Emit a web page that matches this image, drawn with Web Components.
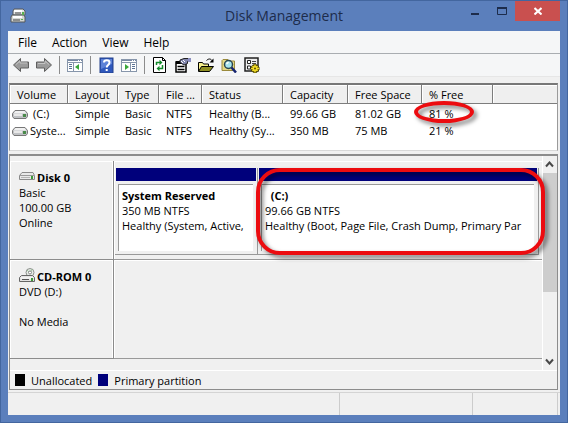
<!DOCTYPE html>
<html lang="en">
<head>
<meta charset="utf-8">
<title>Disk Management</title>
<style>
  body {
    margin: 0;
    font: 11px/15px "Open Sans", "Noto Sans", sans-serif;
    color: #000;
  }
</style>
</head>
<body>
<dm-window></dm-window>

<script>
const ICONS = {
  app: `
    <path d="M4 1h9l2 2v4H3V3z" fill="#e4e6e4" stroke="#56595c"/>
    <path d="M4 3h8" stroke="#fff" stroke-width="2"/>
    <path d="M5 5h6" stroke="#444"/>
    <path d="M2 7h12l1 2v5H1V9z" fill="#d5d7d3" stroke="#55585a"/>
    <path d="M3 9h9" stroke="#fff" stroke-width="2"/>
    <path d="M3 12h7" stroke="#444"/>
    <rect x="12" y="4" width="2" height="3" fill="#58b04e"/>
    <rect x="11" y="11" width="2" height="1" fill="#58b04e"/>`,
  drive: `
    <path d="M3 4.500h10l2.500 3v3l-1.500 2h-12l-1.500-2v-3z" fill="#bfc1c4" stroke="#777"/>
    <path d="M3.500 5h9l2 2.500h-13z" fill="#f1f1f1"/>
    <path d="M2 9h8" stroke="#e8e8e8" stroke-width="2"/>
    <rect x="11" y="8" width="3" height="3" fill="#4a8a4a"/>`,
  disk: `
    <path d="M3 3.500h11l1.500 3v4h-15v-4z" fill="#e8e8e8" stroke="#8a8a8a"/>
    <path d="M1 6.500h14" stroke="#999"/>
    <path d="M2 8.500h9" stroke="#b4b4b4"/>
    <rect x="12" y="7" width="2" height="3" fill="#3e9a3a"/>`,
  cdrom: `
    <circle cx="11" cy="4.500" r="4" fill="#e6ebe6" stroke="#8d918d"/>
    <path d="M8 2l3 3 2-4" fill="none" stroke="#9cc49c"/>
    <circle cx="11" cy="4.500" r="1.500" fill="#fff" stroke="#888"/>
    <path d="M2.500 7.500h11l2 2v4h-15v-4z" fill="#e3e3e3" stroke="#666"/>
    <path d="M2 10h12" stroke="#fff"/>
    <path d="M3 11.500h7" stroke="#555"/>
    <rect x="12" y="10" width="2" height="3" fill="#3e9a3a"/>`,
  back: `<path d="M.5 8l7-6.500v3.500h8v6h-8v3.500z" fill="#9b9b9b" stroke="#5e5e5e"/><path d="M3 7.500l4-3.500v2h7" fill="none" stroke="#c4c4c4"/>`,
  forward: `<path d="M15.500 8l-7-6.500v3.500h-8v6h8v3.500z" fill="#9b9b9b" stroke="#5e5e5e"/><path d="M2 6.500h7v-2.500l4 3.500" fill="none" stroke="#c4c4c4"/>`,
  tree: `
    <rect x=".5" y="2.500" width="15" height="12" fill="#fff" stroke="#8796ab"/>
    <path d="M1 3.500h14" stroke="#7889a4"/><path d="M11 3.500h3" stroke="#fff" stroke-dasharray="1 1"/>
    <path d="M1 5.500h14M6.500 6v8" stroke="#8796ab"/>
    <path d="M2 7.500h3M2 9.500h3M2 11.500h3" stroke="#5c7394"/>
    <path d="M12 7v6L8 10z" fill="#3aa63a"/>`,
  help: `
    <rect x="2" y="1" width="13" height="15" fill="#2f58bc" stroke="#24418c"/>
    <path d="M3 2h11v5L3 12z" fill="#5d82d8"/>
    <path d="M6 5.500C6 2.500 11.500 2.500 11.500 5.500 11.500 8 8.700 7.800 8.700 10.500" fill="none" stroke="#fff" stroke-width="2"/>
    <rect x="7.700" y="12" width="2" height="2" fill="#fff"/>`,
  panel: `
    <rect x=".5" y="2.500" width="15" height="12" fill="#fff" stroke="#8796ab"/>
    <path d="M1 3.500h14" stroke="#7889a4"/><path d="M11 3.500h3" stroke="#fff" stroke-dasharray="1 1"/>
    <path d="M1 5.500h14M9.500 6v8" stroke="#8796ab"/>
    <path d="M11 7.500h3M11 9.500h3M11 11.500h3" stroke="#5c7394"/>
    <path d="M4 7v6l4-3z" fill="#3aa63a"/>`,
  refresh: `
    <path d="M1.500.5h9l3 3v12h-12z" fill="#fff" stroke="#000"/>
    <path d="M10.500.5v3h3" fill="none" stroke="#000"/>
    <path d="M4.500 8V5.500h4M10.500 8v3.500h-4" fill="none" stroke="#138a2b" stroke-width="1.500"/>
    <path d="M7.500 2.800v5.400L10.500 5.500zM7.500 8.800v5.400L4.500 11.500z" fill="#138a2b"/>`,
  properties: `
    <path d="M1 5h10v10H1z" fill="#fff" stroke="#000" stroke-width="1.500"/>
    <path d="M1 5.500h8" stroke="#000" stroke-width="3"/>
    <path d="M2.500 9.500h7M2.500 12.500h7" stroke="#000" stroke-width="1.500"/>
    <path d="M5 3l4-1.500h5l1.500 2-3 1v2L9 8 5 5.500z" fill="#8185ac" stroke="#222"/>
    <path d="M13 1h3v4h-3z" fill="#8b8ec0"/>
    <path d="M6 4l2 2M8 3l2 2" stroke="#fff"/>`,
  open: `
    <path d="M.5 14V5.500h4l1 1.500h5v3" fill="#f7f18e" stroke="#000"/>
    <path d="M.5 14.500l3-5h12l-4 5z" fill="#8f8f23" stroke="#000"/>
    <path d="M8.500 3.500c2-2 4-2 5.500 0" fill="none" stroke="#000"/>
    <path d="M15.500 1.500v4h-4z" fill="#000"/>`,
  search: `
    <path d="M1 13.500V3.500l1-1h5l1 1.500h5.500v9.500z" fill="#e5d985" stroke="#9a8a3c"/>
    <circle cx="7.500" cy="7.500" r="4" fill="#a6e4ee" stroke="#2a4550" stroke-width="1.500"/>
    <path d="M5.500 7l2-2" stroke="#fff" stroke-width="1.500"/>
    <path d="M10.500 10.500l4.500 5" stroke="#15246f" stroke-width="2.500"/>`,
  settings: `
    <path d="M1 1h13v13H1z" fill="#eee" stroke="#222" stroke-width="1.500"/>
    <path d="M3.500 3.500h3v3h-3zM3.500 9h3v3h-3z" fill="#fff" stroke="#222"/>
    <path d="M8 4.500h4M8 6.500h4" stroke="#444"/>
    <path d="M11 7v9M6.500 11.500h9M8 8.500l6 6M14 8.500l-6 6" stroke="#4b4200" stroke-width="3"/>
    <path d="M11 7.500v8M7 11.500h8M8.500 9l5 5M13.500 9l-5 5" stroke="#f4de28" stroke-width="1.500"/>
    <circle cx="11" cy="11.500" r="2.500" fill="#f4de28"/>
    <circle cx="11" cy="11.500" r="1" fill="#554a00"/>`
};

class DmIcon extends HTMLElement {
  constructor() {
    super();
    this.attachShadow({ mode: "open" });
  }

  connectedCallback() {
    this.shadowRoot.innerHTML = `
      <style>
        :host { display: block; flex: none; width: 16px; height: 16px; }
        svg { display: block; }
      </style>
      <svg width="16" height="16" viewBox="0 0 16 16" aria-hidden="true">${ICONS[this.getAttribute("name")]}</svg>
    `;
  }
}

class DmTitlebar extends HTMLElement {
  connectedCallback() {
    this.attachShadow({ mode: "open" }).innerHTML = `
      <style>
        :host {
          display: grid;
          grid-template-columns: 1fr auto 1fr;
          height: 30px;
          color: #1d2c4b;
        }
        dm-icon { align-self: center; margin-left: 2px; }
        h1 { margin: 0; font-size: 14px; line-height: 30px; font-weight: 400; }
        .controls { display: flex; justify-content: flex-end; }
        button {
          display: flex;
          align-items: center;
          justify-content: center;
          width: 27px;
          height: 20px;
          padding: 0;
          border: 0;
          background: none;
          color: inherit;
        }
        .close { width: 45px; background: #c9504f; color: #fff; }
        svg { fill: none; stroke: currentColor; }
      </style>
      <dm-icon name="app"></dm-icon>
      <h1><slot></slot></h1>
      <div class="controls">
        <button aria-label="Minimize"><svg width="10" height="10"><path d="M1 8h8" stroke-width="2"/></svg></button>
        <button aria-label="Maximize"><svg width="10" height="8"><path d="M.5 1v6.500h9V1" /><path d="M0 1h10" stroke-width="2"/></svg></button>
        <button class="close" aria-label="Close"><svg width="8" height="8"><path d="M.5 1l7 6.500M7.500 1l-7 6.500" stroke-width="2"/></svg></button>
      </div>
    `;
  }
}

class DmMenubar extends HTMLElement {
  connectedCallback() {
    const items = this.getAttribute("items").split(",");
    this.attachShadow({ mode: "open" }).innerHTML = `
      <style>
        :host {
          display: flex;
          gap: 15px;
          height: 22px;
          padding: 0 10px;
          font-size: 12px;
          background: #f5f6f7;
          border-bottom: 1px solid #a9adb1;
        }
        button { padding: 0; border: 0; background: none; font: inherit; color: inherit; }
      </style>
      ${items.map(item => `<button>${item}</button>`).join("")}
    `;
  }
}

class DmToolbar extends HTMLElement {
  connectedCallback() {
    const tools = [
      ["back", "Back"], ["forward", "Forward"], null,
      ["tree", "Show/Hide Console Tree"], null,
      ["help", "Help"], ["panel", "Show/Hide Action Pane"], null,
      ["refresh", "Refresh"], ["properties", "Properties"], ["open", "Open"],
      ["search", "Explore"], ["settings", "Settings"]
    ];
    this.attachShadow({ mode: "open" }).innerHTML = `
      <style>
        :host {
          display: flex;
          align-items: center;
          gap: 7px;
          height: 22px;
          padding: 0 5px;
          background: #f5f6f7;
          border-bottom: 1px solid #e6e6e6;
        }
        button { padding: 0; border: 0; background: none; }
        i { width: 1px; height: 18px; background: #8c8c8c; }
      </style>
      ${tools.map(t => t ? `<button aria-label="${t[1]}"><dm-icon name="${t[0]}"></dm-icon></button>` : "<i></i>").join("")}
    `;
  }
}

// red marker drawn over its parent, which must be positioned
class DmMarker extends HTMLElement {
  connectedCallback() {
    this.attachShadow({ mode: "open" }).innerHTML = `
      <style>
        :host {
          position: absolute;
          z-index: 2;
          box-sizing: border-box;
          inset: 0 -7px -1px -2px;
          border: 4px solid #ec0c10;
          border-radius: 24px;
          pointer-events: none;
          filter: drop-shadow(3px 3px 2px rgba(0, 0, 0, .5));
        }
        :host([round]) {
          inset: -5px -20px -2px -15px;
          border-radius: 50%;
        }
      </style>
    `;
  }
}

class DmVolumes extends HTMLElement {
  connectedCallback() {
    const heads = ["Volume", "Layout", "Type", "File ...", "Status", "Capacity", "Free Space", "% Free", ""];
    const widths = [58, 50, 41, 43, 81, 65, 74, 71];
    const rows = [
      ["(C:)", "Simple", "Basic", "NTFS", "Healthy (B...", "99.66 GB", "81.02 GB", "81 %"],
      ["Syste...", "Simple", "Basic", "NTFS", "Healthy (Sy...", "350 MB", "75 MB", "21 %"]
    ];
    this.attachShadow({ mode: "open" }).innerHTML = `
      <style>
        :host {
          display: block;
          height: 65px;
          background: #fff;
          border: 1px solid #9a9a9a;
          border-top: 2px solid #777;
          border-bottom-color: #d8d8d8;
        }
        table { width: 100%; table-layout: fixed; border-collapse: separate; border-spacing: 0; }
        th, td { padding: 0 0 0 7px; text-align: left; font-weight: 400; white-space: nowrap; }
        th {
          height: 18px;
          background: #efefef;
          border-right: 1px solid #7d7d7d;
          border-bottom: 1px solid #7d7d7d;
          box-shadow: inset 1px 1px #fff;
        }
        th:last-child { border-right: 0; }
        td { height: 17px; }
        .name { display: flex; align-items: center; gap: 2px; margin-left: -5px; }
        .name.letter { gap: 5px; }
        .marked { position: relative; display: inline-block; }
        tbody::before { content: ""; display: block; height: 1px; }
      </style>
      <table>
        <colgroup>${widths.map(w => `<col style="width:${w}px">`).join("")}<col></colgroup>
        <thead><tr>${heads.map(h => `<th scope="col">${h}</th>`).join("")}</tr></thead>
        <tbody>
          ${rows.map((row, r) => `<tr>${row.map((cell, c) => {
            if (c === 0) return `<td><div class="name ${r === 0 ? "letter" : ""}"><dm-icon name="drive"></dm-icon>${cell}</div></td>`;
            if (r === 0 && c === 7) return `<td><span class="marked">${cell}<dm-marker round></dm-marker></span></td>`;
            return `<td>${cell}</td>`;
          }).join("")}<td></td></tr>`).join("")}
        </tbody>
      </table>
    `;
  }
}

class DmDisk extends HTMLElement {
  connectedCallback() {
    this.attachShadow({ mode: "open" }).innerHTML = `
      <style>
        :host { display: flex; height: 99px; }
        .label {
          box-sizing: border-box;
          flex: none;
          width: 104px;
          padding: 8px 0 0 9px;
          border-right: 1px solid #8c8c8c;
          border-bottom: 1px solid #8c8c8c;
          box-shadow: inset -1px 1px #fff, inset 1px 0 #fff;
        }
        .name { display: flex; align-items: center; gap: 2px; height: 16px; font-weight: 700; }
        .info { white-space: pre-line; }
        .parts {
          display: flex;
          flex: 1;
          min-width: 0;
          padding: 7px 3px 4px 1px;
          border-bottom: 1px solid #999;
          box-shadow: inset 1px 1px #fff;
        }
      </style>
      <div class="label">
        <div class="name"><dm-icon name="${this.getAttribute("icon")}"></dm-icon>${this.getAttribute("name")}</div>
        <div class="info">${this.getAttribute("info")}</div>
      </div>
      <div class="parts"><slot></slot></div>
    `;
  }
}

class DmPartition extends HTMLElement {
  connectedCallback() {
    this.attachShadow({ mode: "open" }).innerHTML = `
      <style>
        :host {
          position: relative;
          display: flex;
          flex-direction: column;
          flex: 1;
          min-width: 0;
          border-right: 1px solid #999;
          border-bottom: 1px solid #999;
        }
        :host([small]) { flex: 0 1 142px; }
        .bar { height: 13px; margin: 0 1px; background: #00007b; }
        .body {
          flex: 1;
          margin: 3px 4px 3px 3px;
          padding: 3px 2px 0 3px;
          background: #fff;
          border-top: 1px solid #999;
          border-left: 1px solid #999;
        }
        .text { overflow: hidden; white-space: pre; }
        b { display: block; }
      </style>
      <div class="bar"></div>
      <div class="body"><div class="text"><b>${this.getAttribute("name")}</b>${this.getAttribute("info")}</div></div>
      <slot></slot>
    `;
  }
}

class DmScrollbar extends HTMLElement {
  connectedCallback() {
    this.attachShadow({ mode: "open" }).innerHTML = `
      <style>
        :host {
          display: flex;
          flex-direction: column;
          flex: none;
          width: 15px;
          background: #f0f0f0;
          box-shadow: inset 1px 0 #fff;
        }
        button { display: grid; place-items: center; height: 17px; padding: 0; border: 0; background: none; }
        .track { flex: 1; }
        .thumb { height: 66%; background: #cdcdcd; margin-left: 1px; }
        path { fill: none; stroke: #484848; stroke-width: 2; }
      </style>
      <button aria-label="Scroll up"><svg width="9" height="7"><path d="M1 5.500l3.500-4 3.500 4"/></svg></button>
      <div class="track"><div class="thumb"></div></div>
      <button aria-label="Scroll down"><svg width="9" height="7"><path d="M1 1.500l3.500 4 3.500-4"/></svg></button>
    `;
  }
}

class DmLegend extends HTMLElement {
  connectedCallback() {
    this.attachShadow({ mode: "open" }).innerHTML = `
      <style>
        :host {
          display: flex;
          align-items: center;
          gap: 6px;
          height: 18px;
          padding-left: 5px;
          border-top: 1px solid #fff;
        }
        i { width: 10px; height: 12px; background: #000; }
        .primary { background: #00007b; }
      </style>
      <i></i><span>Unallocated</span>
      <i class="primary"></i><span>Primary partition</span>
    `;
  }
}

class DmWindow extends HTMLElement {
  connectedCallback() {
    this.attachShadow({ mode: "open" }).innerHTML = `
      <style>
        :host {
          box-sizing: border-box;
          display: flex;
          flex-direction: column;
          min-height: 100vh;
          padding: 0 7px 7px;
          background: #5b7fbc;
          border: 1px solid #43669f;
        }
        main {
          display: flex;
          flex-direction: column;
          flex: 1;
          background: #f0f0f0;
        }
        .panes { display: flex; flex-direction: column; flex: 1; padding: 6px 2px 0 1px; }
        .graph {
          display: flex;
          flex-direction: column;
          flex: 1;
          margin-top: 3px;
          border: 1px solid #8c8c8c;
          border-top: 2px solid #8c8c8c;
        }
        .view { display: flex; flex: 1; }
        .disks { flex: 1; min-width: 0; padding-top: 5px; }
        .status {
          display: grid;
          grid-template-columns: 331fr 133fr 85fr;
          height: 22px;
          margin-top: 2px;
          padding-right: 2px;
          border-top: 1px solid #d4d4d4;
        }
        .status span { border-right: 1px solid #ccc; }
      </style>
      <dm-titlebar>Disk Management</dm-titlebar>
      <main>
        <dm-menubar items="File,Action,View,Help"></dm-menubar>
        <dm-toolbar></dm-toolbar>
        <div class="panes">
          <dm-volumes></dm-volumes>
          <div class="graph">
            <div class="view">
              <div class="disks">
                <dm-disk icon="disk" name="Disk 0" info="Basic\n100.00 GB\nOnline">
                  <dm-partition small name="System Reserved" info="350 MB NTFS\nHealthy (System, Active,"></dm-partition>
                  <dm-partition name="  (C:)" info="99.66 GB NTFS\nHealthy (Boot, Page File, Crash Dump, Primary Par">
                    <dm-marker></dm-marker>
                  </dm-partition>
                </dm-disk>
                <dm-disk icon="cdrom" name="CD-ROM 0" info="DVD (D:)\n\nNo Media"></dm-disk>
              </div>
              <dm-scrollbar></dm-scrollbar>
            </div>
            <dm-legend></dm-legend>
          </div>
        </div>
        <div class="status"><span></span><span></span><span></span></div>
      </main>
    `;
  }
}

customElements.define("dm-icon", DmIcon);
customElements.define("dm-titlebar", DmTitlebar);
customElements.define("dm-menubar", DmMenubar);
customElements.define("dm-toolbar", DmToolbar);
customElements.define("dm-marker", DmMarker);
customElements.define("dm-volumes", DmVolumes);
customElements.define("dm-disk", DmDisk);
customElements.define("dm-partition", DmPartition);
customElements.define("dm-scrollbar", DmScrollbar);
customElements.define("dm-legend", DmLegend);
customElements.define("dm-window", DmWindow);
</script>
</body>
</html>
